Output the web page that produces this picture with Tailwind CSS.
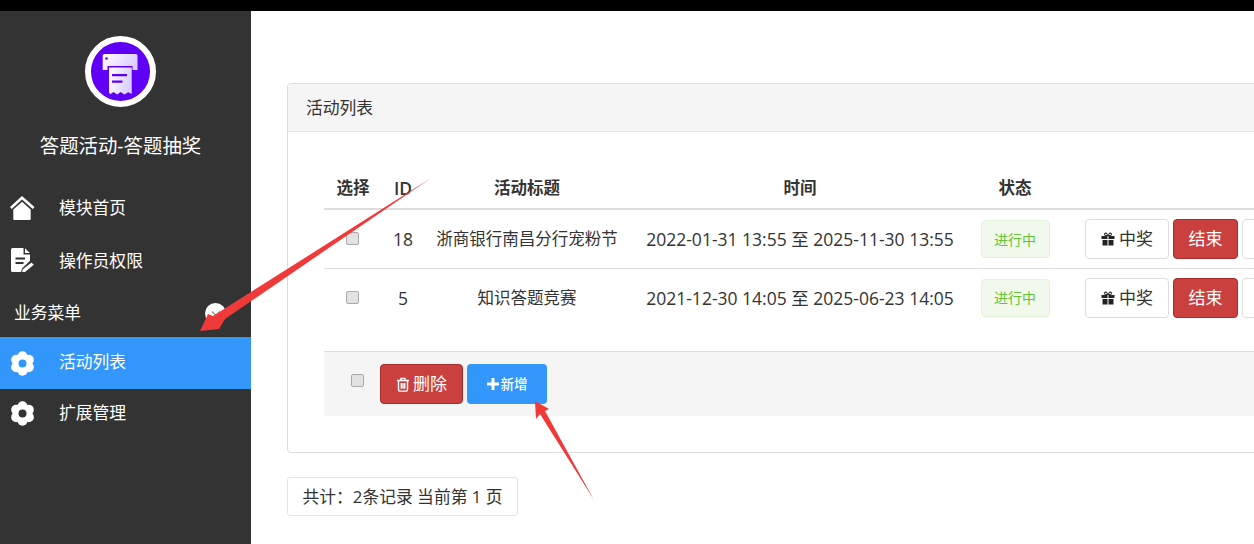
<!doctype html>
<html lang="zh-CN">
<head>
<meta charset="utf-8">
<title>活动列表</title>
<script src="https://cdn.jsdelivr.net/npm/@tailwindcss/browser@4"></script>
</head>
<body class="relative h-[544px] w-[1254px] overflow-hidden bg-white font-['Open_Sans','Noto_Sans_CJK_SC',sans-serif] text-[#333]">
<div class="h-[11px] bg-black"></div>
<div class="flex h-[533px]">
  <aside class="w-[251px] shrink-0 bg-[#333] text-white">
    <div class="flex h-[171px] flex-col items-center pr-[10px] pt-[25px]">
      <div class="flex size-[71px] items-center justify-center rounded-full border-[6px] border-white bg-[#5f00f5]">
        <svg viewBox="0 0 59 59" class="size-[59px] shrink-0">
          <defs><linearGradient id="g" x1="0" x2="1" y1="0" y2="0.3"><stop offset="0" stop-color="#fff"/><stop offset="1" stop-color="#dccfff"/></linearGradient></defs>
          <path fill="url(#g)" d="M13.500 12h31.200a1.800 1.800 0 0 1 1.800 1.800V28h-5v-4H16.500v4h-4.800V13.800A1.800 1.800 0 0 1 13.500 12z"/>
          <circle cx="15.500" cy="16.500" r="1.300" fill="#5f00f5"/>
          <path fill="url(#g)" d="M18 25.500h22.700V52l-3.500-1.800-3.800 2.300-3.800-2.600-3.400 2.600-3.700-2.600-3.200 2.300L18 50.500z"/>
          <path fill="#5f00f5" d="M21 32h15v2.300H21zM21 38.500h10.500v2.300H21z"/>
        </svg>
      </div>
      <div class="mt-[24px] text-[19.400px] leading-[30px] whitespace-nowrap">答题活动-答题抽奖</div>
    </div>
    <nav class="text-[16.800px]">
      <a class="flex h-[52px] items-center pl-[10px]">
        <svg viewBox="0 0 25 24" class="h-[24px] w-[25px]" fill="#fff"><path d="M12 0 24.500 11 22.800 13 12 3.600 1.700 13 0 11z"/><path d="M12 5.700 3.300 13.500V23a1 1 0 0 0 1 1h15.400a1 1 0 0 0 1-1v-9.500z"/></svg>
        <span class="ml-[24px]">模块首页</span>
      </a>
      <a class="flex h-[52px] items-center pl-[11px]">
        <svg viewBox="0 0 23 24" class="h-[24px] w-[23px]" fill="#fff"><path d="M1.500 0H12.500v6.500H19v6.200L11 20.500 10 24H1.500A1.500 1.500 0 0 1 0 22.500v-21A1.500 1.500 0 0 1 1.500 0z"/><path d="M14 .3 18.800 5H14z"/><path fill="#333" d="M4.500 9.500h9.500v2H4.500zM4.500 14h8v2H4.500z"/><path d="M20.500 14.500 22.800 16.800 14 24h-2.700v-2.300z"/></svg>
        <span class="ml-[25px] pt-[1px]">操作员权限</span>
      </a>
      <div class="flex h-[51px] items-center justify-between pl-[14px] pr-[25px] pt-[3px]">
        <span>业务菜单</span>
        <span class="flex size-[21px] items-center justify-center rounded-full bg-white">
          <svg viewBox="0 0 10 10" class="size-[10px]" fill="none" stroke="#6a9b7a" stroke-width="1.200"><path d="M1 3.500 5 7.500l4-4"/></svg>
        </span>
      </div>
      <a class="flex h-[52px] items-center bg-[#3296fa] pl-[10px]">
        <svg viewBox="0 0 25 25" class="size-[25px]" fill="#fff"><circle cx="12.500" cy="12.500" r="9"/><circle cx="12.500" cy="5.200" r="5"/><circle cx="12.500" cy="19.800" r="5"/><circle cx="6.200" cy="8.850" r="5"/><circle cx="18.800" cy="8.850" r="5"/><circle cx="6.200" cy="16.150" r="5"/><circle cx="18.800" cy="16.150" r="5"/><circle cx="12.500" cy="12.500" r="4" fill="#3296fa"/></svg>
        <span class="ml-[24px] pb-[2px]">活动列表</span>
      </a>
      <a class="-mt-[1px] flex h-[50px] items-center pl-[10px]">
        <svg viewBox="0 0 25 25" class="size-[25px]" fill="#fff"><circle cx="12.500" cy="12.500" r="9"/><circle cx="12.500" cy="5.200" r="5"/><circle cx="12.500" cy="19.800" r="5"/><circle cx="6.200" cy="8.850" r="5"/><circle cx="18.800" cy="8.850" r="5"/><circle cx="6.200" cy="16.150" r="5"/><circle cx="18.800" cy="16.150" r="5"/><circle cx="12.500" cy="12.500" r="4" fill="#333"/></svg>
        <span class="ml-[24px]">扩展管理</span>
      </a>
    </nav>
  </aside>
  <main class="w-[1003px] shrink-0 overflow-hidden pl-[36px] pt-[72px]">
    <section class="h-[370px] w-[1100px] overflow-hidden rounded-[4px] border border-[#ddd]">
      <div class="flex h-[48px] items-center border-b border-[#e7e7e7] bg-[#f5f5f5] pl-[18px] text-[16.800px]">活动列表</div>
      <div class="pl-[36px] pt-[37px]">
        <div class="grid h-[41px] grid-cols-[58px_42px_206px_340px_90px_1fr] items-center border-b-2 border-[#ddd] text-center text-[16.500px] font-semibold">
          <div>选择</div><div class="text-[17.500px]">ID</div><div>活动标题</div><div>时间</div><div>状态</div><div></div>
        </div>
        <div class="grid h-[59px] grid-cols-[58px_42px_206px_340px_90px_1fr] items-center border-b border-[#ddd] text-center text-[16.500px]">
          <div><input type="checkbox" class="mb-[3px] ml-[-2px] size-[13px] appearance-none rounded-[2px] border border-[#aaa] bg-[#e2e2e2] align-middle"></div>
          <div class="text-[17.500px]">18</div>
          <div class="whitespace-nowrap">浙商银行南昌分行宠粉节</div>
          <div class="whitespace-nowrap text-[17.500px]">2022-01-31 13:55 至 2025-11-30 13:55</div>
          <div class="flex justify-center"><span class="flex h-[38px] w-[69px] items-center justify-center rounded-[4px] border border-[#e1f3d8] bg-[#f0f9eb] text-[14px] text-[#67c23a]">进行中</span></div>
          <div class="flex gap-[4px] pl-[25px] text-left">
            <button class="flex h-[40px] w-[84px] items-center justify-center gap-[4px] rounded-[4px] border border-[#ddd] bg-white text-[17px]">
              <svg viewBox="0 0 14 14" class="size-[14px]" fill="#222"><path d="M.5 4h6v3h-6zM7.500 4h6v3h-6zM1.500 8H6.500v5.500H2a.5.5 0 0 1-.5-.5zM7.500 8h5v5a.5.5 0 0 1-.5.500H7.500z"/><path fill-rule="evenodd" d="M4.500.5C6 .3 6.800 2 7 3.500 7.200 2 8 .3 9.500.5c2 .3 2 3.500-.5 3.500H5C2.500 4 2.500.8 4.500.5zM4.600 1.800c-.9 0-.8 1.200 0 1.200H6C5.800 2.300 5.300 1.800 4.600 1.800zM9.400 1.800c-.7 0-1.200.5-1.400 1.200h1.400c.8 0 .9-1.200 0-1.200z"/></svg>
              中奖
            </button>
            <button class="h-[40px] w-[65px] rounded-[4px] border border-[#a82c2c] bg-[#c9403f] text-[17px] text-white">结束</button>
            <button class="h-[40px] w-[84px] rounded-[4px] border border-[#ddd] bg-white"></button>
          </div>
        </div>
        <div class="grid h-[59px] grid-cols-[58px_42px_206px_340px_90px_1fr] items-center text-center text-[16.500px]">
          <div class="pb-[2px]"><input type="checkbox" class="mb-[3px] ml-[-2px] size-[13px] appearance-none rounded-[2px] border border-[#aaa] bg-[#e2e2e2] align-middle"></div>
          <div class="text-[17.500px]">5</div>
          <div class="whitespace-nowrap">知识答题竞赛</div>
          <div class="whitespace-nowrap text-[17.500px]">2021-12-30 14:05 至 2025-06-23 14:05</div>
          <div class="flex justify-center pb-[2px]"><span class="flex h-[38px] w-[69px] items-center justify-center rounded-[4px] border border-[#e1f3d8] bg-[#f0f9eb] text-[14px] text-[#67c23a]">进行中</span></div>
          <div class="flex gap-[4px] pb-[2px] pl-[25px] text-left">
            <button class="flex h-[40px] w-[84px] items-center justify-center gap-[4px] rounded-[4px] border border-[#ddd] bg-white text-[17px]">
              <svg viewBox="0 0 14 14" class="size-[14px]" fill="#222"><path d="M.5 4h6v3h-6zM7.500 4h6v3h-6zM1.500 8H6.500v5.500H2a.5.5 0 0 1-.5-.5zM7.500 8h5v5a.5.5 0 0 1-.5.500H7.500z"/><path fill-rule="evenodd" d="M4.500.5C6 .3 6.800 2 7 3.500 7.200 2 8 .3 9.500.5c2 .3 2 3.500-.5 3.500H5C2.500 4 2.500.8 4.500.5zM4.600 1.800c-.9 0-.8 1.200 0 1.200H6C5.800 2.300 5.300 1.800 4.600 1.800zM9.400 1.800c-.7 0-1.200.5-1.400 1.200h1.400c.8 0 .9-1.200 0-1.200z"/></svg>
              中奖
            </button>
            <button class="h-[40px] w-[65px] rounded-[4px] border border-[#a82c2c] bg-[#c9403f] text-[17px] text-white">结束</button>
            <button class="h-[40px] w-[84px] rounded-[4px] border border-[#ddd] bg-white"></button>
          </div>
        </div>
        <div class="mt-[23px] flex h-[65px] items-center border-t border-[#ddd] bg-[#f5f5f5] pl-[27px]">
          <input type="checkbox" class="mb-[8px] size-[13px] appearance-none rounded-[2px] border border-[#aaa] bg-[#e2e2e2]">
          <button class="ml-[16px] flex h-[40px] w-[83px] items-center justify-center gap-[3px] rounded-[4px] border border-[#a82c2c] bg-[#c9403f] text-[17px] text-white">
            <svg viewBox="0 0 14 15" class="h-[15px] w-[14px]" fill="none" stroke="#fff" stroke-width="1.400"><path d="M1 3.500h12M5 3.200V1.400h4v1.800M2.500 3.500v9.300c0 .8.500 1.300 1.200 1.300h6.600c.7 0 1.200-.5 1.200-1.300V3.500M5.300 6v5.800M7 6v5.800M8.700 6v5.800"/></svg>
            删除
          </button>
          <button class="ml-[4px] flex h-[40px] w-[80px] items-center justify-center gap-[2px] rounded-[4px] bg-[#3296fa] text-[13.500px] font-medium text-white">
            <svg viewBox="0 0 12 12" class="size-[12px]" fill="#fff"><path d="M4.500 0h3v4.500H12v3H7.500V12h-3V7.500H0v-3h4.500z"/></svg>
            新增
          </button>
        </div>
      </div>
    </section>
    <div class="mt-[24px] flex h-[39px] w-[231px] items-center justify-center whitespace-nowrap rounded-[3px] border border-[#e5e5e5] text-[16.800px]">共计：2条记录 当前第 1 页</div>
  </main>
</div>
<svg class="pointer-events-none absolute inset-0" width="1254" height="544" viewBox="0 0 1254 544">
  <polygon fill="#f03a3a" points="431,178 225,319 219,329 200,331 208,314 213,316"/>
  <polygon fill="#f03a3a" points="594,500 545,411 549,409 535,401 536,419 540,414"/>
</svg>
</body>
</html>
